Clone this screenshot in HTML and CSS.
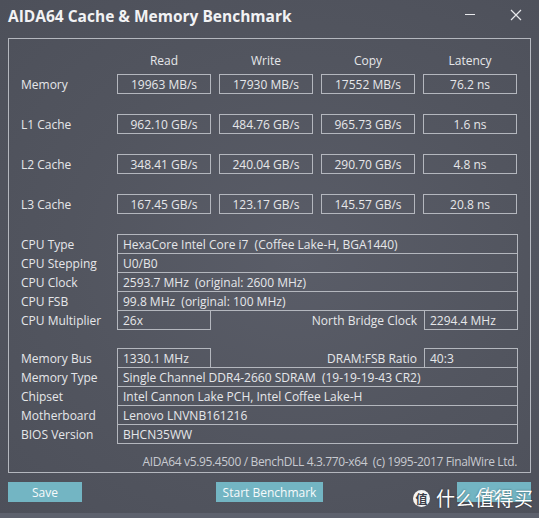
FILE: index.html
```html
<!DOCTYPE html>
<html>
<head>
<meta charset="utf-8">
<link rel="stylesheet" href="styles.css">
</head>
<body>
<div class="window">
  <div class="titlebar">
    <div class="title">AIDA64 Cache &amp; Memory Benchmark</div>
    <div class="controls">
      <span class="ctl"><svg width="12" height="12" viewBox="0 0 12 12"><line x1="1" y1="5.5" x2="11" y2="5.5" stroke="#e8e9ec" stroke-width="1"/></svg></span>
      <span class="ctl"><svg width="12" height="12" viewBox="0 0 12 12"><path d="M1 1 L11 11 M11 1 L1 11" stroke="#e8e9ec" stroke-width="1.2" fill="none"/></svg></span>
    </div>
  </div>

  <div class="frame">
    <div class="bench-head">
      <span></span><span>Read</span><span>Write</span><span>Copy</span><span>Latency</span>
    </div>
    <div class="bench">
      <span class="lbl">Memory</span><span class="box">19963 MB/s</span><span class="box">17930 MB/s</span><span class="box">17552 MB/s</span><span class="box">76.2 ns</span>
      <span class="lbl">L1 Cache</span><span class="box">962.10 GB/s</span><span class="box">484.76 GB/s</span><span class="box">965.73 GB/s</span><span class="box">1.6 ns</span>
      <span class="lbl">L2 Cache</span><span class="box">348.41 GB/s</span><span class="box">240.04 GB/s</span><span class="box">290.70 GB/s</span><span class="box">4.8 ns</span>
      <span class="lbl">L3 Cache</span><span class="box">167.45 GB/s</span><span class="box">123.17 GB/s</span><span class="box">145.57 GB/s</span><span class="box">20.8 ns</span>
    </div>

    <div class="info info-cpu">
      <div class="row"><span class="lbl">CPU Type</span><span class="val">HexaCore Intel Core i7  (Coffee Lake-H, BGA1440)</span></div>
      <div class="row"><span class="lbl">CPU Stepping</span><span class="val">U0/B0</span></div>
      <div class="row"><span class="lbl">CPU Clock</span><span class="val">2593.7 MHz  (original: 2600 MHz)</span></div>
      <div class="row"><span class="lbl">CPU FSB</span><span class="val">99.8 MHz  (original: 100 MHz)</span></div>
      <div class="row split"><span class="lbl">CPU Multiplier</span><span class="val">26x</span><span class="lbl right">North Bridge Clock</span><span class="val">2294.4 MHz</span></div>
    </div>

    <div class="info info-mem">
      <div class="row split"><span class="lbl">Memory Bus</span><span class="val">1330.1 MHz</span><span class="lbl right">DRAM:FSB Ratio</span><span class="val">40:3</span></div>
      <div class="row"><span class="lbl">Memory Type</span><span class="val">Single Channel DDR4-2660 SDRAM  (19-19-19-43 CR2)</span></div>
      <div class="row"><span class="lbl">Chipset</span><span class="val">Intel Cannon Lake PCH, Intel Coffee Lake-H</span></div>
      <div class="row"><span class="lbl">Motherboard</span><span class="val">Lenovo LNVNB161216</span></div>
      <div class="row"><span class="lbl">BIOS Version</span><span class="val">BHCN35WW</span></div>
    </div>

    <div class="footer">AIDA64 v5.95.4500 / BenchDLL 4.3.770-x64  (c) 1995-2017 FinalWire Ltd.</div>
  </div>

  <div class="buttons">
    <span class="btn btn-save">Save</span>
    <span class="btn btn-start">Start Benchmark</span>
    <span class="btn btn-close">Close</span>
  </div>
  <div class="strip"></div>

  <div class="watermark">
    <span class="wm-icon">值</span><span class="wm-text">什么值得买</span>
  </div>
</div>
</body>
</html>
```

FILE: styles.css
```css
html, body {
  margin: 0;
  padding: 0;
}
body {
  width: 539px;
  height: 518px;
  overflow: hidden;
  background: #50535e;
  font-family: "Open Sans", "Noto Sans", sans-serif;
  color: #e6e7ea;
}
.window {
  position: relative;
  width: 539px;
  height: 518px;
  background: radial-gradient(ellipse at 55% 50%, #5a5d68 0%, #52555f 55%, #4d505a 100%);
  display: flex;
  flex-direction: column;
}
.titlebar {
  display: flex;
  height: 38px;
  padding-left: 8px;
}
.title {
  padding-top: 6px;
  font-size: 15.5px;
  line-height: 20px;
  font-weight: 700;
  color: #f2f2f4;
  white-space: nowrap;
}
.controls {
  margin-left: auto;
  display: flex;
}
.ctl {
  width: 46px;
  height: 30px;
  display: flex;
  justify-content: center;
  padding-top: 9px;
  box-sizing: border-box;
}
.frame {
  box-sizing: border-box;
  margin: 0 8px;
  height: 435px;
  border: 1px solid #b4b7be;
  padding: 0 12px;
  font-size: 12px;
}
.bench-head, .bench {
  display: grid;
  grid-template-columns: 88px repeat(4, 94px);
  column-gap: 8px;
}
.bench-head {
  padding-top: 14px;
  line-height: 16px;
  margin-bottom: 5px;
  text-align: center;
}
.bench {
  row-gap: 20px;
}
.lbl {
  box-sizing: border-box;
  height: 20px;
  padding-top: 1px;
  line-height: 20px;
  white-space: nowrap;
}
.box {
  box-sizing: border-box;
  height: 20px;
  border: 1px solid #b4b7be;
  padding-top: 1px;
  line-height: 18px;
  text-align: center;
  white-space: nowrap;
}
.info {
  display: flex;
  flex-direction: column;
}
.info-cpu {
  margin-top: 20px;
}
.info-mem {
  margin-top: 18px;
}
.row {
  display: grid;
  grid-template-columns: 88px 1fr;
  column-gap: 8px;
}
.row + .row {
  margin-top: -1px;
}
.row.split {
  grid-template-columns: 88px 94px 1fr 94px;
}
.lbl.right {
  text-align: right;
  margin-right: -1px;
}
.val {
  box-sizing: border-box;
  height: 20px;
  border: 1px solid #b4b7be;
  padding-top: 1px;
  line-height: 18px;
  padding-left: 5px;
  white-space: pre;
  overflow: hidden;
}
.footer {
  margin-top: 10px;
  line-height: 16px;
  text-align: right;
  padding-right: 1px;
  color: #c8cad0;
  letter-spacing: -0.35px;
  white-space: pre;
}
.buttons {
  display: flex;
  justify-content: space-between;
  padding: 0 8px;
  margin-top: 9px;
}
.btn {
  box-sizing: border-box;
  height: 20px;
  padding-top: 1px;
  line-height: 20px;
  background: #73b5c3;
  color: #f7fafb;
  font-size: 12px;
  text-align: center;
}
.btn-save { width: 74px; }
.btn-start { width: 107px; }
.btn-close { width: 74px; }
.strip {
  margin-top: auto;
  height: 5px;
  background: #5d616d;
}
.watermark {
  position: absolute;
  left: 413px;
  top: 487px;
  display: flex;
  align-items: center;
  gap: 6px;
}
.wm-icon {
  width: 17px;
  height: 17px;
  border-radius: 50%;
  background: #f4f4f4;
  color: #3c3f48;
  font-family: "Noto Sans CJK SC", sans-serif;
  font-size: 12px;
  font-weight: 700;
  line-height: 17px;
  text-align: center;
}
.wm-text {
  font-family: "Noto Sans CJK SC", sans-serif;
  font-size: 19px;
  line-height: 22px;
  color: #ffffff;
  letter-spacing: 0.5px;
  text-shadow: 0 0 2px rgba(0,0,0,0.5);
}
```
